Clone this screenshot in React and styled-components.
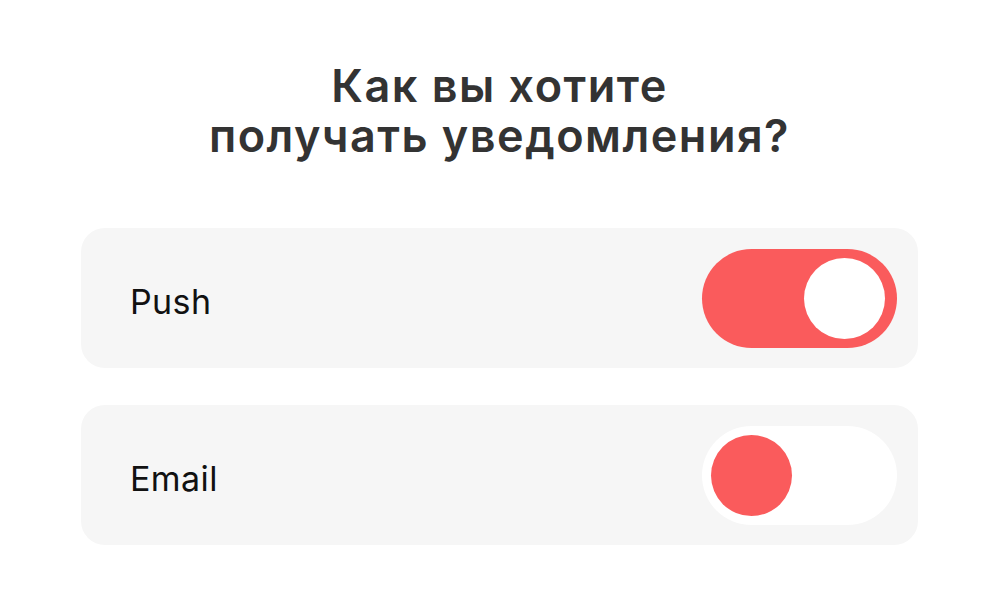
import React, { useState } from "react";
import styled, { createGlobalStyle } from "styled-components";

const GlobalStyle = createGlobalStyle`
  html, body {
    margin: 0;
    padding: 0;
    background: #ffffff;
  }
  body {
    font-family: "Inter", "Noto Sans", sans-serif;
  }
`;

const App = () => {
  const [settings, setSettings] = useState({ push: true, email: false });

  const toggle = (key) => {
    setSettings({ ...settings, [key]: !settings[key] });
  };

  return (
    <Page>
      <GlobalStyle />
      <Title>
        Как вы хотите
        <br />
        получать уведомления?
      </Title>
      <List>
        <Row>
          <Label>Push</Label>
          <Switch $on={settings.push} onClick={() => toggle("push")}>
            <Knob $on={settings.push} />
          </Switch>
        </Row>
        <Row>
          <Label>Email</Label>
          <Switch $on={settings.email} onClick={() => toggle("email")}>
            <Knob $on={settings.email} />
          </Switch>
        </Row>
      </List>
    </Page>
  );
};

const Page = styled.div`
  width: 1002px;
  height: 600px;
  box-sizing: border-box;
  padding: 61px 84px 0 81px;
  display: flex;
  flex-direction: column;
  align-items: stretch;
`;

const Title = styled.h1`
  margin: 0;
  height: 109px;
  text-align: center;
  font-family: "Inter", "Noto Sans", sans-serif;
  font-size: 45px;
  line-height: 50px;
  font-weight: 600;
  color: #333333;
  letter-spacing: 1.5px;
`;

const List = styled.div`
  margin-top: 58px;
  display: flex;
  flex-direction: column;
  gap: 37px;
`;

const Row = styled.div`
  height: 140px;
  box-sizing: border-box;
  padding: 6px 21px 0 49px;
  background: #f6f6f6;
  border-radius: 24px;
  display: flex;
  align-items: center;
  justify-content: space-between;
`;

const Label = styled.span`
  font-family: "Inter", "Noto Sans", sans-serif;
  font-size: 34px;
  font-weight: 400;
  color: #111111;
  letter-spacing: 0.4px;
`;

const Switch = styled.button`
  width: 195px;
  height: 99px;
  margin-top: -6px;
  padding: 0 10px;
  border: 0;
  border-radius: 50px;
  background: ${(p) => (p.$on ? "#fa5b5c" : "#ffffff")};
  display: flex;
  align-items: center;
  justify-content: ${(p) => (p.$on ? "flex-end" : "flex-start")};
  cursor: pointer;
  box-sizing: border-box;
`;

const Knob = styled.span`
  width: 81px;
  height: 81px;
  border-radius: 50%;
  background: ${(p) => (p.$on ? "#ffffff" : "#fa5b5c")};
  margin-left: ${(p) => (p.$on ? "0" : "-1px")};
  margin-right: ${(p) => (p.$on ? "2px" : "0")};
`;

export default App;
